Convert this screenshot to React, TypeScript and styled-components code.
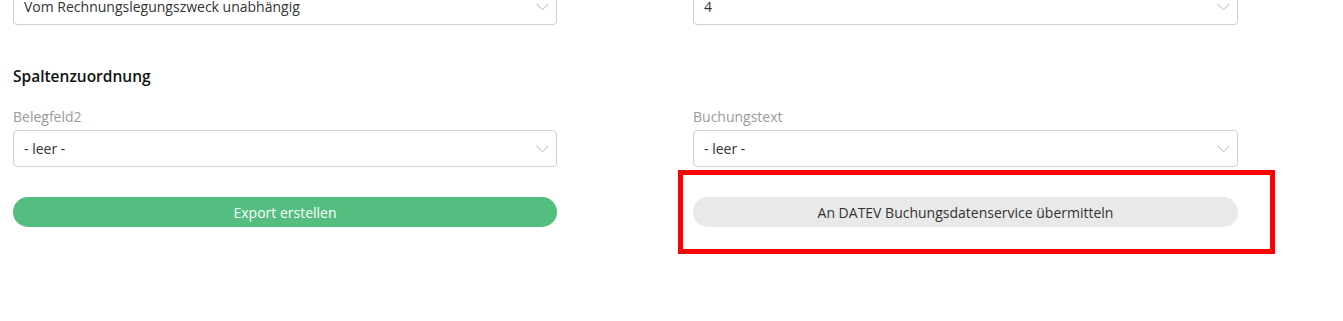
import styled, { createGlobalStyle } from 'styled-components';

const GlobalStyle = createGlobalStyle`
  html, body {
    margin: 0;
    padding: 0;
    background: #ffffff;
    font-family: 'Open Sans', 'Liberation Sans', sans-serif;
    color: #333333;
  }
  * {
    box-sizing: border-box;
  }
`;

type SelectProps = {
  value: string;
};

const Chevron = () => (
  <svg width="13" height="8" viewBox="0 0 13 8" fill="none">
    <polyline points="0.5,0.8 6.5,6.8 12.5,0.8" stroke="#b5b5b5" strokeWidth="1" />
  </svg>
);

const Select = ({ value }: SelectProps) => (
  <SelectBox>
    <SelectValue>{value}</SelectValue>
    <Chevron />
  </SelectBox>
);

const App = () => {
  return (
    <>
      <GlobalStyle />
      <Page>
        <Row>
          <Select value="Vom Rechnungslegungszweck unabhängig" />
          <Select value="4" />
        </Row>

        <Heading>Spaltenzuordnung</Heading>

        <FieldRow>
          <Field>
            <Label>Belegfeld2</Label>
            <Select value="- leer -" />
          </Field>
          <Field>
            <Label>Buchungstext</Label>
            <Select value="- leer -" />
          </Field>
        </FieldRow>

        <ButtonRow>
          <Button $variant="primary">Export erstellen</Button>
          <Highlighted>
            <Button $variant="secondary">An DATEV Buchungsdatenservice übermitteln</Button>
            <Marker />
          </Highlighted>
        </ButtonRow>
      </Page>
    </>
  );
};

export default App;

const Page = styled.div`
  padding: 0 13px 94px;
  width: 1343px;
  min-height: 321px;
`;

const Row = styled.div`
  display: grid;
  grid-template-columns: 544px 545px;
  column-gap: 136px;
  margin-top: -12px;
`;

const Heading = styled.h3`
  margin: 40px 0 0;
  font-size: 15.5px;
  font-weight: 600;
  line-height: 22px;
  color: #111111;
`;

const FieldRow = styled(Row)`
  margin-top: 20px;
`;

const Field = styled.div`
  display: flex;
  flex-direction: column;
`;

const Label = styled.label`
  font-size: 14px;
  line-height: 20px;
  color: #9a9a9a;
  margin-bottom: 3px;
`;

const SelectBox = styled.div`
  height: 37px;
  border: 1px solid #cfcfcf;
  border-radius: 4px;
  background: #ffffff;
  display: flex;
  align-items: center;
  justify-content: space-between;
  padding: 0 7px 0 10px;
`;

const SelectValue = styled.span`
  font-size: 14px;
  color: #333333;
`;

const ButtonRow = styled(Row)`
  margin-top: 30px;
`;

const Highlighted = styled.div`
  position: relative;
`;

const Button = styled.button<{ $variant: 'primary' | 'secondary' }>`
  width: 100%;
  height: 30px;
  border: none;
  border-radius: 15px;
  font-family: 'Open Sans', 'Liberation Sans', sans-serif;
  font-size: 14px;
  cursor: pointer;
  background: ${({ $variant }) => ($variant === 'primary' ? '#53be80' : '#e9e9e9')};
  color: ${({ $variant }) => ($variant === 'primary' ? '#ffffff' : '#333333')};
`;

const Marker = styled.div`
  position: absolute;
  left: -15px;
  right: -37px;
  top: -27px;
  bottom: -27px;
  border: 5px solid #ff0000;
  pointer-events: none;
`;
